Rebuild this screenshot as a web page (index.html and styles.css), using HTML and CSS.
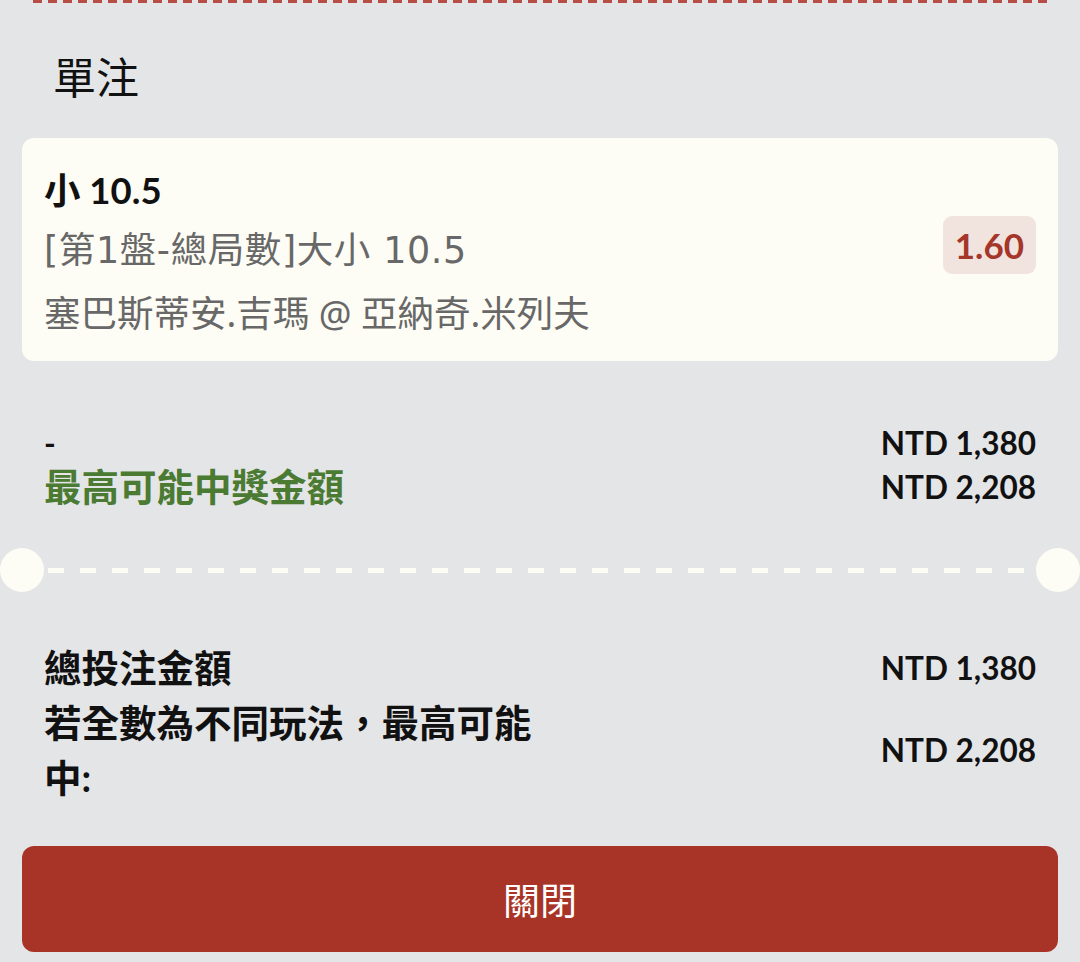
FILE: index.html
```html
<!DOCTYPE html>
<html lang="zh-Hant">
<head>
    <meta charset="UTF-8">
    <title>單注</title>
    <meta name="viewport" content="width=device-width, initial-scale=1.0">
    <link rel="stylesheet" href="styles.css">
</head>
<body>
<div class="sheet">
    <div class="top-edge"></div>
    <h2 class="title">單注</h2>

    <div class="bet-card">
        <div class="bet-info">
            <div class="bet-pick">小 10.5</div>
            <div class="bet-line market">[第1盤-總局數]大小 10.5</div>
            <div class="bet-line">塞巴斯蒂安.吉瑪 @ 亞納奇.米列夫</div>
        </div>
        <span class="odds">1.60</span>
    </div>

    <div class="summary">
        <div>
            <div class="stake">-</div>
            <div class="win-label">最高可能中獎金額</div>
        </div>
        <div class="amounts">
            <div>NTD 1,380</div>
            <div>NTD 2,208</div>
        </div>
    </div>

    <div class="perforation">
        <span class="notch"></span>
        <span class="dashes"></span>
        <span class="notch"></span>
    </div>

    <div class="totals">
        <div class="totals-label">總投注金額</div>
        <div class="totals-value">NTD 1,380</div>
        <div class="totals-label">若全數為不同玩法，最高可能中:</div>
        <div class="totals-value">NTD 2,208</div>
    </div>

    <button class="close-btn">關閉</button>
</div>
</body>
</html>
```

FILE: styles.css
```css
body {
    margin: 0;
    background: #e4e5e7;
    font-family: Lato, "Noto Sans CJK TC", sans-serif;
    color: #111;
}

.sheet {
    width: 1080px;
    height: 962px;
    overflow: hidden;
}

.top-edge {
    height: 3px;
    margin: 0 33px;
    background: repeating-linear-gradient(90deg, #b84d47 0 9px, transparent 9px 15px);
}

.title {
    margin: 42px 0 0 53px;
    font-family: "Noto Sans CJK TC", sans-serif;
    font-size: 43px;
    font-weight: 400;
    line-height: 60px;
}

.bet-card {
    margin: 33px 22px 0;
    padding: 22px 22px 17px;
    background: #fefdf5;
    border-radius: 12px;
    display: flex;
    align-items: center;
    justify-content: space-between;
}

.bet-pick {
    font-size: 36.5px;
    font-weight: 700;
    line-height: 60px;
}

.bet-line {
    font-family: "Noto Sans", "Noto Sans CJK TC", sans-serif;
    font-size: 36.5px;
    line-height: 62px;
    color: #686868;
}

.market {
    font-family: "DejaVu Sans", "Noto Sans CJK TC", sans-serif;
    letter-spacing: 0.6px;
}

.odds {
    margin-bottom: 15px;
    padding: 0 12px;
    line-height: 58px;
    font-size: 35px;
    font-weight: 700;
    color: #a5362a;
    background: #f1e4df;
    border-radius: 9px;
}

.summary {
    margin: 60px 44px 0;
    display: flex;
    justify-content: space-between;
    font-size: 31.5px;
    font-weight: 700;
    line-height: 44px;
}

.win-label {
    font-size: 37.5px;
    color: #4b7b33;
}

.amounts {
    text-align: right;
}

.perforation {
    margin-top: 39px;
    height: 44px;
    display: flex;
    align-items: center;
}

.notch {
    width: 44px;
    height: 44px;
    border-radius: 50%;
    background: #fefdf5;
    flex: none;
}

.dashes {
    flex: 1;
    height: 5px;
    margin: 0 4px;
    background: repeating-linear-gradient(90deg, #fefdf5 0 16px, transparent 16px 32px);
}

.totals {
    margin: 48px 44px 0;
    display: grid;
    grid-template-columns: 500px 1fr;
    align-items: center;
}

.totals-label {
    font-size: 37.5px;
    font-weight: 700;
    line-height: 55px;
}

.totals-value {
    font-size: 31.5px;
    font-weight: 700;
    text-align: right;
}

.close-btn {
    display: block;
    width: 1036px;
    height: 106px;
    margin: 41px 22px 0;
    border: none;
    border-radius: 12px;
    background: #a73426;
    color: #fff;
    font-family: "Noto Sans CJK TC", sans-serif;
    font-size: 37px;
}
```
